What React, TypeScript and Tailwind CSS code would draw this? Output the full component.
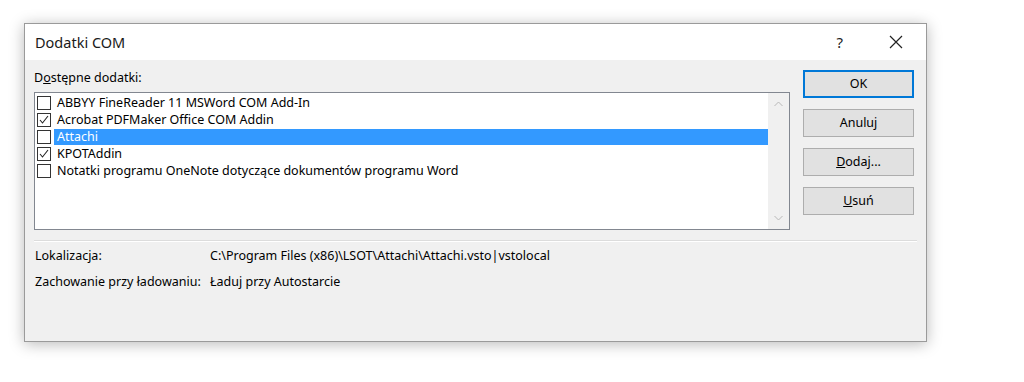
const items = [
    { name: "ABBYY FineReader 11 MSWord COM Add-In", checked: false },
    { name: "Acrobat PDFMaker Office COM Addin", checked: true },
    { name: "Attachi", checked: false, selected: true },
    { name: "KPOTAddin", checked: true },
    { name: "Notatki programu OneNote dotyczące dokumentów programu Word", checked: false },
];

const font = { fontFamily: '"Noto Sans", "Open Sans", sans-serif' };

const CheckBox = ({ checked }: { checked: boolean }) => (
    <span className="w-[14px] h-[14px] border border-[#333] bg-white flex items-center justify-center shrink-0">
        {checked && (
            <svg width="12" height="12" viewBox="0 0 12 12">
                <path d="M2 6 L4.5 9 L10 2" fill="none" stroke="#222" strokeWidth="1.1" />
            </svg>
        )}
    </span>
);

const DialogButton = ({ children, primary }: { children: React.ReactNode; primary?: boolean }) => (
    <button
        className={
            "h-[28px] w-[111px] bg-[#e1e1e1] text-[12.5px] text-black flex items-center justify-center " +
            (primary ? "border-2 border-[#0078d7]" : "border border-[#adadad]")
        }
    >
        {children}
    </button>
);

const Chevron = ({ up }: { up?: boolean }) => (
    <svg width="9" height="6" viewBox="0 0 9 6">
        <path
            d={up ? "M0.5 5 L4.5 1 L8.5 5" : "M0.5 1 L4.5 5 L8.5 1"}
            fill="none"
            stroke="#b8b8b8"
            strokeWidth="1"
        />
    </svg>
);

export default function App() {
    return (
        <div className="w-[1024px] h-[382px] bg-white pt-[23px] pl-[24px]" style={font}>
            <div className="w-[903px] h-[319px] border border-[#9a9a9a] bg-[#f0f0f0] flex flex-col shadow-[0_2px_14px_rgba(0,0,0,0.28)]">
                {/* title bar */}
                <div className="h-[36px] bg-white flex items-center pl-[10px] pr-[20px]">
                    <span className="text-[14.5px] text-[#1a1a1a] pt-[1px]">Dodatki COM</span>
                    <span className="ml-auto text-[15px] text-[#222] mr-[46px]">?</span>
                    <svg width="14" height="14" viewBox="0 0 14 14" className="mr-[3px]">
                        <path d="M1 1 L13 13 M13 1 L1 13" stroke="#222" strokeWidth="1.2" />
                    </svg>
                </div>

                {/* body */}
                <div className="flex-1 px-[9px] pt-[10px]">
                    <div className="flex">
                        <div className="w-[756px]">
                            <div className="h-[22px] text-[12.5px] leading-[16px] text-black">
                                D<span className="underline">o</span>stępne dodatki:
                            </div>
                            <div className="h-[138px] border border-[#828790] bg-white flex">
                                <div className="flex-1 pt-[1px] pl-[2px]">
                                    {items.map((item) => (
                                        <div key={item.name} className="h-[17px] flex items-center">
                                            <CheckBox checked={item.checked} />
                                            <span
                                                className={
                                                    "flex-1 h-[16px] ml-[3px] pl-[3px] text-[12.5px] leading-[16px] whitespace-nowrap " +
                                                    (item.selected ? "bg-[#3399ff] text-white" : "text-black")
                                                }
                                            >
                                                {item.name}
                                            </span>
                                        </div>
                                    ))}
                                </div>
                                <div className="w-[21px] bg-[#f0f0f0] flex flex-col items-center justify-between py-[8px]">
                                    <Chevron up />
                                    <Chevron />
                                </div>
                            </div>
                        </div>

                        <div className="ml-[13px] flex flex-col gap-[11px]">
                            <DialogButton primary>OK</DialogButton>
                            <DialogButton>Anuluj</DialogButton>
                            <DialogButton>
                                <span className="underline">D</span>odaj...
                            </DialogButton>
                            <DialogButton>
                                <span className="underline">U</span>suń
                            </DialogButton>
                        </div>
                    </div>

                    <div className="mt-[10px] w-[883px] h-[2px] border-t border-[#dcdcdc] border-b border-b-white" />

                    <div className="mt-[6px] text-[12.5px] leading-[16px] text-black">
                        <div className="flex pl-[1px]">
                            <span className="w-[175px]">Lokalizacja:</span>
                            <span>C:\Program Files (x86)\LSOT\Attachi\Attachi.vsto|vstolocal</span>
                        </div>
                        <div className="flex pl-[1px] mt-[10px]">
                            <span className="w-[175px]">Zachowanie przy ładowaniu:</span>
                            <span>Ładuj przy Autostarcie</span>
                        </div>
                    </div>
                </div>
            </div>
        </div>
    );
}
